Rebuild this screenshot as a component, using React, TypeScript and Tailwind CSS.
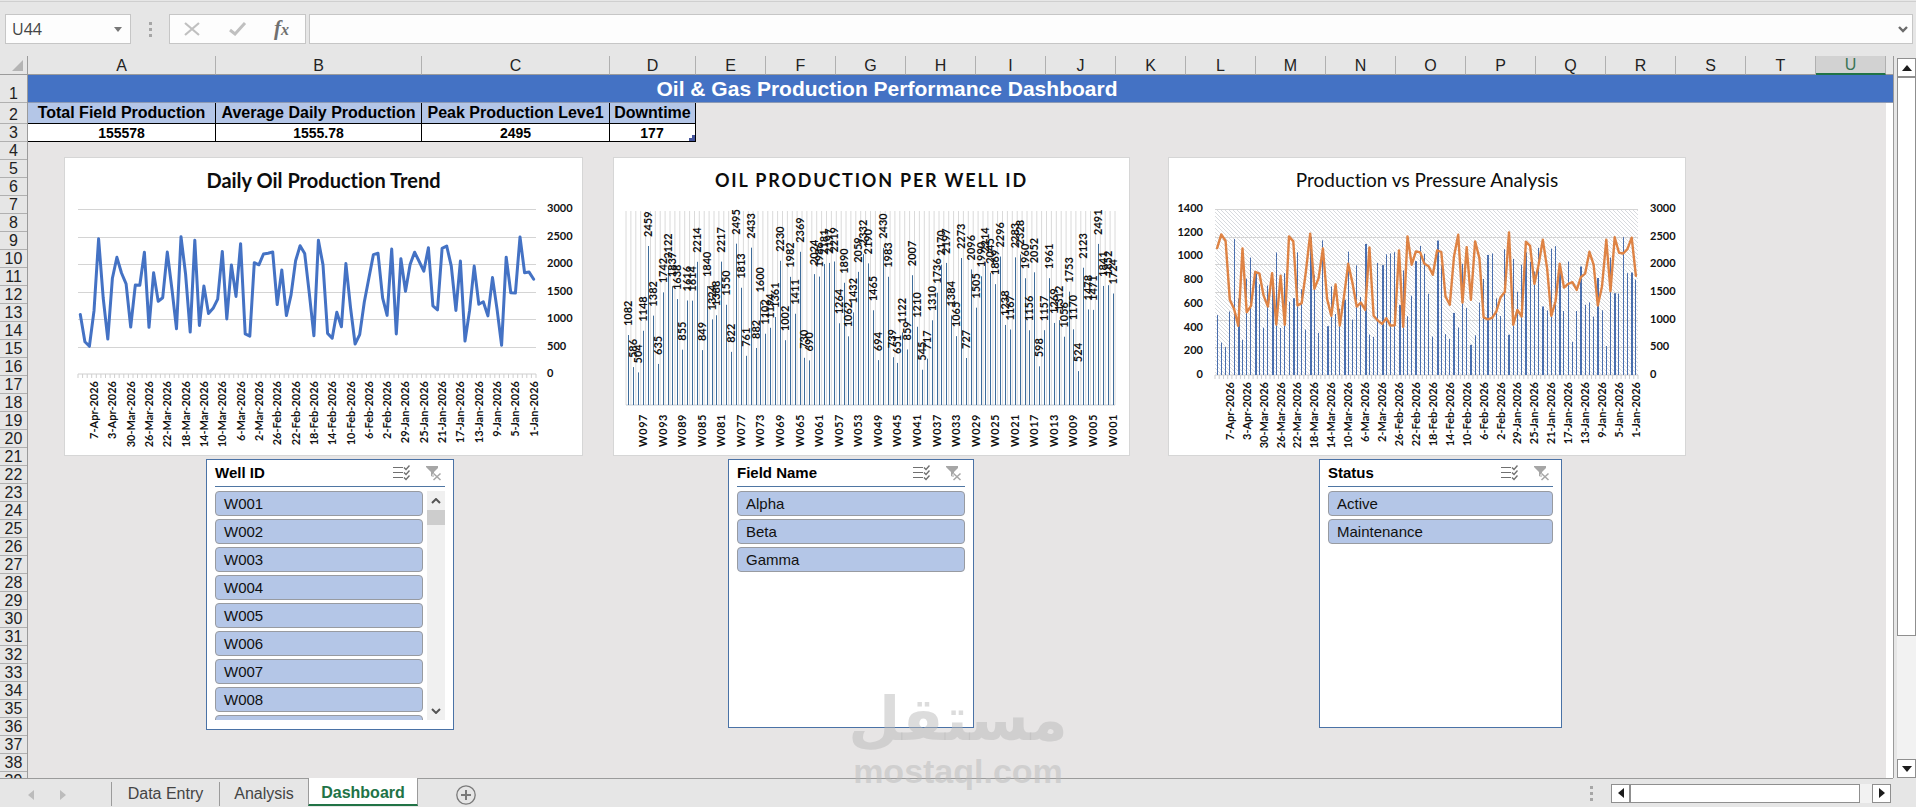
import type { ReactNode } from "react";

const PRODUCTION = [
  1082, 586, 504, 1148, 2459, 1382, 635, 1742, 2122, 1837, 1638, 855, 1616, 1614, 2214, 849, 1840, 1324, 1388, 2217,
  1550, 822, 2495, 1813, 761, 2433, 882, 1600, 1102, 1194, 1361, 2230, 1002, 1982, 1411, 2369, 730, 690, 2024, 1986,
  2181, 2197, 2219, 1264, 1890, 1062, 1432, 2059, 2332, 2190, 1465, 694, 2430, 1983, 739, 651, 1122, 859, 2007, 1210,
  545, 717, 1310, 1736, 2170, 2197, 1384, 1065, 2273, 727, 2096, 1505, 1990, 2214, 2045, 1869, 2296, 1238, 1167, 2283,
  2328, 1960, 1156, 2052, 598, 1157, 1961, 1269, 1312, 1056, 1753, 1170, 524, 2123, 1478, 1471, 2491, 1841, 1852, 1724,
];

const PRESSURE = [
  1070, 1186, 1130, 634, 558, 414, 1068, 530, 583, 870, 856, 670, 577, 859, 425, 837, 423, 1169, 1127, 586,
  606, 873, 1192, 727, 817, 1068, 642, 499, 763, 417, 662, 938, 775, 577, 611, 549, 1076, 499, 459, 431,
  479, 417, 420, 1051, 406, 1169, 930, 1042, 1034, 938, 918, 845, 1051, 1037, 662, 592, 1000, 1183, 611, 1079,
  634, 1127, 986, 487, 470, 482, 535, 654, 699, 1203, 423, 549, 493, 1124, 1090, 769, 930, 1141, 901, 499,
  620, 938, 738, 769, 783, 718, 825, 854, 1039, 930, 586, 746, 1141, 707, 1161, 1031, 1025, 1062, 1158, 837,
];

const DATES = [
  "7-Apr-2026", "3-Apr-2026", "30-Mar-2026", "26-Mar-2026", "22-Mar-2026", "18-Mar-2026", "14-Mar-2026",
  "10-Mar-2026", "6-Mar-2026", "2-Mar-2026", "26-Feb-2026", "22-Feb-2026", "18-Feb-2026", "14-Feb-2026",
  "10-Feb-2026", "6-Feb-2026", "2-Feb-2026", "29-Jan-2026", "25-Jan-2026", "21-Jan-2026", "17-Jan-2026",
  "13-Jan-2026", "9-Jan-2026", "5-Jan-2026", "1-Jan-2026",
];

const COLUMNS = "ABCDEFGHIJKLMNOPQRSTU".split("");
const COUNT = PRODUCTION.length;
const AXIS_TEXT = "fill-[#111] text-[11px] font-bold";

type Plot = { left: number; right: number; top: number; bottom: number };

const centre = (p: Plot, i: number) => p.left + ((i + 0.5) * (p.right - p.left)) / COUNT;
const level = (p: Plot, value: number, max: number) => p.bottom - (value / max) * (p.bottom - p.top);
const toPoints = (p: Plot, data: number[], max: number) =>
  data.map((v, i) => `${centre(p, i).toFixed(1)},${level(p, v, max).toFixed(1)}`).join(" ");

const WIDE_BARS = new Set(Array.from({ length: 23 }, (_, n) => Math.floor(5.4 + n * 4.25)));

function Vertical({ x, y, anchor, className, children }: { x: number; y: number; anchor: "start" | "end"; className: string; children: ReactNode }) {
  return (
    <text x={x} y={y} transform={`rotate(-90 ${x} ${y})`} dy="4" textAnchor={anchor} className={className}>
      {children}
    </text>
  );
}

function DateAxis({ plot }: { plot: Plot }) {
  const step = (plot.right - plot.left) / COUNT;
  return (
    <g>
      <path
        d={Array.from({ length: COUNT + 1 }, (_, i) => `M${(plot.left + i * step).toFixed(1)} ${plot.bottom}v4`).join("")}
        stroke="#cfcfcf"
      />
      <path d={`M${plot.left} ${plot.bottom}H${plot.right}`} stroke="#cfcfcf" />
      {DATES.map((d, i) => (
        <Vertical key={d} x={centre(plot, 3 + i * 4)} y={plot.bottom + 7} anchor="end" className={AXIS_TEXT}>
          {d}
        </Vertical>
      ))}
    </g>
  );
}

function GridLines({ plot }: { plot: Plot }) {
  return (
    <path
      d={[500, 1000, 1500, 2000, 2500, 3000].map((v) => `M${plot.left} ${Math.round(level(plot, v, 3000)) + 0.5}H${plot.right}`).join("")}
      stroke="#d4d4d4"
    />
  );
}

function ValueAxis({ plot, x, max, step, anchor }: { plot: Plot; x: number; max: number; step: number; anchor: "start" | "end" }) {
  return (
    <g>
      {Array.from({ length: max / step + 1 }, (_, i) => i * step).map((v) => (
        <text key={v} x={x} y={level(plot, v, max) + 3} textAnchor={anchor} className={AXIS_TEXT}>
          {v}
        </text>
      ))}
    </g>
  );
}

function ChartCard({ title, titleClass, children }: { title: string; titleClass: string; children: ReactNode }) {
  return (
    <figure className="border border-[#d6d6d6] bg-white font-['Lato',sans-serif] [font-variant-ligatures:none]">
      <figcaption className={`flex h-12 items-center justify-center pb-1 leading-6 whitespace-nowrap text-[#0d0d0d] ${titleClass}`}>{title}</figcaption>
      {children}
    </figure>
  );
}

function TrendChart() {
  const plot = { left: 13, right: 471, top: 3, bottom: 168 };
  return (
    <ChartCard title="Daily Oil Production Trend" titleClass="text-[20px] font-bold">
      <svg viewBox="0 0 517 249" className="block w-full overflow-visible">
        <GridLines plot={plot} />
        <DateAxis plot={plot} />
        <ValueAxis plot={plot} x={482} max={3000} step={500} anchor="start" />
        <polyline points={toPoints(plot, PRODUCTION, 3000)} fill="none" stroke="#4472c4" strokeWidth="3" strokeLinejoin="round" strokeLinecap="round" />
      </svg>
    </ChartCard>
  );
}

function WellChart() {
  const plot = { left: 12, right: 501, top: 5, bottom: 199 };
  const step = (plot.right - plot.left) / COUNT;
  return (
    <ChartCard title="OIL PRODUCTION PER WELL ID" titleClass="text-[18px] font-bold tracking-widest">
      <svg viewBox="0 0 515 249" className="block w-full overflow-visible">
        <path
          d={Array.from({ length: COUNT + 1 }, (_, i) => `M${(plot.left + i * step).toFixed(1)} ${plot.top}V${plot.bottom}`).join("")}
          stroke="#dadada"
        />
        <path d={`M${plot.left} ${plot.bottom}H${plot.right}`} stroke="#c4ccd4" />
        {PRODUCTION.map((v, i) => {
          const x = centre(plot, i);
          const y = level(plot, v, 3000);
          return (
            <g key={i}>
              <rect x={Math.round(x)} y={y} width="1" height={plot.bottom - y} fill="#3f6d9b" />
              <Vertical x={x} y={y - 9} anchor="start" className="fill-[#111] text-[11px] font-bold">
                {v}
              </Vertical>
            </g>
          );
        })}
        {Array.from({ length: 25 }, (_, i) => (
          <Vertical key={i} x={centre(plot, 3 + i * 4)} y={plot.bottom + 9} anchor="end" className="fill-[#111] text-[11px] font-bold tracking-wider">
            {`W${String(97 - i * 4).padStart(3, "0")}`}
          </Vertical>
        ))}
      </svg>
    </ChartCard>
  );
}

function PressureChart() {
  const plot = { left: 46, right: 469, top: 3, bottom: 169 };
  return (
    <ChartCard title="Production vs Pressure Analysis" titleClass="text-[19px]">
      <svg viewBox="0 0 516 249" className="block w-full overflow-visible">
        <defs>
          <pattern id="hatch" width="4" height="4" patternUnits="userSpaceOnUse">
            <path d="M0 0L4 4M-1 3L1 5M3 -1L5 1" stroke="#d2d6da" strokeWidth="0.9" />
          </pattern>
        </defs>
        <rect x={plot.left} y={plot.top} width={plot.right - plot.left} height={plot.bottom - plot.top} fill="url(#hatch)" />
        <GridLines plot={plot} />
        <DateAxis plot={plot} />
        <ValueAxis plot={plot} x={34} max={1400} step={200} anchor="end" />
        <ValueAxis plot={plot} x={481} max={3000} step={500} anchor="start" />
        {PRODUCTION.map((v, i) => {
          const y = level(plot, v, 3000);
          return <rect key={i} x={Math.round(centre(plot, i) - 0.5)} y={y} width={WIDE_BARS.has(i) ? 2 : 1} height={plot.bottom - y} fill="#4a6fae" />;
        })}
        <polyline points={toPoints(plot, PRESSURE, 1400)} fill="none" stroke="#de8344" strokeWidth="2.4" strokeLinejoin="round" strokeLinecap="round" />
      </svg>
    </ChartCard>
  );
}

function MultiSelectIcon() {
  return (
    <svg viewBox="0 0 17 16" className="h-4 w-[17px]" fill="none" stroke="#707070">
      <path d="M0 2.5H10M0 7.5H10M0 12.5H10" />
      <path d="M11 2.5L13 4.5L16.5 0.5M11 7.5L13 9.5L16.5 5.5M11 12.5L13 14.5L16.5 10.5" strokeWidth="1.4" />
    </svg>
  );
}

function ClearFilterIcon() {
  return (
    <svg viewBox="0 0 16 16" className="size-4">
      <path d="M0 1H12V3L8 7V8L5 11V7L0 2Z" fill="#a6a6a6" />
      <path d="M5.5 6V11H8" fill="none" stroke="#a6a6a6" />
      <path d="M7.5 8.5L14.5 15M14.5 8.5L7.5 15" stroke="#a6a6a6" strokeWidth="1.5" />
    </svg>
  );
}

function Chevron({ up = false }: { up?: boolean }) {
  return (
    <svg viewBox="0 0 10 6" className="h-1.5 w-[10px]" fill="none" stroke="#555" strokeWidth="2">
      <path d={up ? "M1 5L5 1L9 5" : "M1 1L5 5L9 1"} />
    </svg>
  );
}

function Slicer({ title, items, className, scroll = false }: { title: string; items: string[]; className: string; scroll?: boolean }) {
  return (
    <section aria-label={title} className={`flex flex-col border border-[#4a72a6] bg-white px-2 pb-[9px] ${className}`}>
      <header className="flex h-[27px] shrink-0 items-center border-b border-[#4f76a3]">
        <h2 className="flex-1 text-[15px] leading-5 font-bold text-black">{title}</h2>
        <button aria-label="Multi-select" className="mr-4">
          <MultiSelectIcon />
        </button>
        <button aria-label="Clear filter" className="mr-[3px]">
          <ClearFilterIcon />
        </button>
      </header>
      <div className="mt-1 flex min-h-0 flex-1 gap-1">
        <ul className="flex min-w-0 flex-1 flex-col gap-[3px] overflow-hidden">
          {items.map((item) => (
            <li key={item} className="shrink-0">
              <button className="block h-[25px] w-full rounded-sm border border-[#989ba1] bg-[#b4c6e7] px-2 text-left text-[15px] leading-5 text-[#111]">
                {item}
              </button>
            </li>
          ))}
        </ul>
        {scroll && (
          <div className="flex w-[18px] flex-col items-center bg-[#f0f0f0]">
            <button aria-label="Scroll up" className="flex h-[19px] items-center">
              <Chevron up />
            </button>
            <div className="h-[15px] w-full bg-[#cdcdcd]" />
            <button aria-label="Scroll down" className="mt-auto flex h-[19px] items-center">
              <Chevron />
            </button>
          </div>
        )}
      </div>
    </section>
  );
}

function FormulaBar() {
  return (
    <div className="flex h-[54px] shrink-0 items-start border-t border-[#cfcfcf] pt-3 pr-[3px] pl-[5px] font-['Open_Sans','Noto_Sans',sans-serif]">
      <div className="flex h-[30px] w-[126px] items-center border border-[#c6c6c6] bg-[#fdfdfd] pr-2">
        <input aria-label="Name box" defaultValue="U44" className="min-w-0 flex-1 bg-transparent pl-1.5 text-base text-[#444] outline-none" />
        <svg viewBox="0 0 8 5" className="h-[5px] w-2">
          <path d="M0 0H8L4 5Z" fill="#777" />
        </svg>
      </div>
      <div className="flex h-[30px] w-[38px] flex-col items-center justify-center gap-[3px]">
        <i className="size-[3px] bg-[#a6a6a6]" />
        <i className="size-[3px] bg-[#a6a6a6]" />
        <i className="size-[3px] bg-[#a6a6a6]" />
      </div>
      <div className="mr-[3px] flex h-[30px] w-[137px] items-center border border-[#c6c6c6] bg-[#fdfdfd] pl-[14px]">
        <button aria-label="Cancel" className="mr-[29px]">
          <svg viewBox="0 0 16 14" className="h-3.5 w-4" stroke="#c0c0c0" strokeWidth="2.2" fill="none">
            <path d="M1 1L15 13M15 1L1 13" />
          </svg>
        </button>
        <button aria-label="Enter" className="mr-[27px]">
          <svg viewBox="0 0 18 14" className="h-3.5 w-[18px]" stroke="#c0c0c0" strokeWidth="3" fill="none">
            <path d="M1 8L6 12L16 1" />
          </svg>
        </button>
        <button aria-label="Insert function" className="font-['Liberation_Serif',serif] text-[21px] leading-6 font-bold text-[#707070] italic">
          f<span className="text-base">x</span>
        </button>
      </div>
      <div className="flex h-[30px] flex-1 items-center border border-[#c6c6c6] bg-[#fdfdfd] pr-1">
        <input aria-label="Formula bar" className="min-w-0 flex-1 bg-transparent px-2 text-base outline-none" />
        <svg viewBox="0 0 10 7" className="h-[7px] w-[10px]" fill="none" stroke="#6b6b6b" strokeWidth="2.4">
          <path d="M1 1L5 5L9 1" />
        </svg>
      </div>
    </div>
  );
}

const rowHeight = (row: number) => (row === 1 ? "h-7" : row === 2 ? "h-[21px]" : "h-[18px]");

function RowHeadings() {
  return (
    <div className="flex w-7 shrink-0 flex-col overflow-hidden border-r border-[#9b9b9b] text-base text-[#222]">
      <div className="flex h-[19px] shrink-0 items-end justify-end border-b border-[#9b9b9b] pr-1 pb-[3px]">
        <svg viewBox="0 0 11 11" className="size-[11px]">
          <path d="M11 0V11H0Z" fill="#b4b4b4" />
        </svg>
      </div>
      {Array.from({ length: 39 }, (_, i) => i + 1).map((row) => (
        <div key={row} className={`flex shrink-0 items-end justify-center border-b border-[#b0b0b0] leading-4 ${rowHeight(row)}`}>
          {row}
        </div>
      ))}
    </div>
  );
}

const KPIS = [
  ["Total Field Production", "155578"],
  ["Average Daily Production", "1555.78"],
  ["Peak Production Leve1", "2495"],
  ["Downtime", "177"],
];

function CellTable() {
  return (
    <table className="w-full table-fixed border-separate border-spacing-0 text-center">
      <colgroup>
        <col className="w-[188px]" />
        <col className="w-[206px]" />
        <col className="w-[188px]" />
        <col className="w-[86px]" />
        {COLUMNS.slice(4).map((c) => (
          <col key={c} className="w-[70px]" />
        ))}
        <col />
      </colgroup>
      <thead>
        <tr className="h-[19px] text-base leading-4">
          {COLUMNS.map((c) => (
            <th
              key={c}
              scope="col"
              className={
                c === "U"
                  ? "border-r border-b-2 border-r-[#b0b0b0] border-b-[#217346] bg-[#d2d2d2] p-0 pt-px font-normal text-[#3b7557]"
                  : "border-r border-b border-r-[#b0b0b0] border-b-[#9b9b9b] p-0 pt-0.5 font-normal text-[#222]"
              }
            >
              {c}
            </th>
          ))}
          <td className="border-b border-[#9b9b9b] p-0" />
        </tr>
      </thead>
      <tbody>
        <tr className="h-7 bg-[#4472c4]">
          <td colSpan={19} className="border-b border-[#8d9ab5] p-0 text-[21px] leading-6 font-bold text-white">
            Oil &amp; Gas Production Performance Dashboard
          </td>
          <td colSpan={3} className="border-b border-[#8d9ab5] p-0" />
        </tr>
        <tr className="h-[21px] text-base leading-5">
          {KPIS.map(([name]) => (
            <td key={name} className="border-r border-b border-black bg-[#b4c6e7] p-0 font-bold whitespace-nowrap text-black">
              {name}
            </td>
          ))}
          <td colSpan={17} className="bg-[#e7e5e5] p-0" />
          <td className="bg-white p-0" />
        </tr>
        <tr className="h-[18px] text-sm leading-4">
          {KPIS.map(([name, value]) => (
            <td key={name} className="border-r border-b border-black bg-white p-0 font-bold text-black">
              {name === "Downtime" ? (
                <div className="flex items-end">
                  <span className="flex-1 pl-[5px]">{value}</span>
                  <svg viewBox="0 0 6 6" className="size-1.5">
                    <path d="M3 0H6V6H0V3H3Z" fill="#44549c" />
                  </svg>
                </div>
              ) : (
                value
              )}
            </td>
          ))}
          <td colSpan={17} className="bg-[#e7e5e5] p-0" />
          <td className="bg-white p-0" />
        </tr>
      </tbody>
    </table>
  );
}

const ARROWS = {
  up: "M0 6L5 0L10 6Z",
  down: "M0 0H10L5 6Z",
  left: "M6 0V10L0 5Z",
  right: "M0 0V10L6 5Z",
};

function ScrollButton({ direction, label }: { direction: keyof typeof ARROWS; label: string }) {
  const tall = direction === "left" || direction === "right";
  return (
    <button aria-label={label} className="flex size-[19px] shrink-0 items-center justify-center border border-[#8f8f8f] bg-white">
      <svg viewBox={tall ? "0 0 6 10" : "0 0 10 6"} className={tall ? "h-[10px] w-1.5" : "h-1.5 w-[10px]"}>
        <path d={ARROWS[direction]} fill="#1c1c1c" />
      </svg>
    </button>
  );
}

function SheetTabs() {
  return (
    <footer className="flex h-[29px] shrink-0 items-start text-base">
      <div className="flex h-[29px] w-[111px] items-center gap-[26px] border-t border-[#9b9b9b] pt-1 pl-7">
        <svg viewBox="0 0 6 10" className="h-[10px] w-1.5">
          <path d={ARROWS.left} fill="#bcbcbc" />
        </svg>
        <svg viewBox="0 0 6 10" className="h-[10px] w-1.5">
          <path d={ARROWS.right} fill="#bcbcbc" />
        </svg>
      </div>
      <nav className="flex h-[29px]">
        <a href="#data-entry" className="flex w-[108px] border-t border-[#9b9b9b] pt-[3px] text-[#444]">
          <span className="flex h-6 flex-1 items-center justify-center border-l border-[#9b9b9b]">Data Entry</span>
        </a>
        <a href="#analysis" className="flex w-[89px] border-t border-[#9b9b9b] pt-[3px] text-[#444]">
          <span className="flex h-6 flex-1 items-center justify-center border-l border-[#9b9b9b]">Analysis</span>
        </a>
        <a href="#dashboard" aria-current="page" className="flex h-7 w-[110px] items-center justify-center border-x border-b-2 border-x-[#9b9b9b] border-b-[#217346] bg-white pt-1 font-bold text-[#217346]">
          Dashboard
        </a>
      </nav>
      <div className="flex h-[29px] flex-1 items-center border-t border-[#9b9b9b] pt-1 pl-[38px]">
        <button aria-label="New sheet">
          <svg viewBox="0 0 20 20" className="size-5" fill="none" stroke="#7a7a7a">
            <circle cx="10" cy="10" r="9.2" strokeWidth="1.3" />
            <path d="M5 10H15M10 5V15" strokeWidth="2" />
          </svg>
        </button>
      </div>
      <div className="flex h-[29px] items-center border-t border-[#9b9b9b] pr-[2px]">
        <div className="mr-[18px] flex flex-col gap-[3px]">
          <i className="size-[3px] bg-[#a6a6a6]" />
          <i className="size-[3px] bg-[#a6a6a6]" />
          <i className="size-[3px] bg-[#a6a6a6]" />
        </div>
        <ScrollButton direction="left" label="Scroll left" />
        <div className="h-[19px] w-[230px] border border-[#8f8f8f] bg-white" />
        <div className="h-[19px] w-3 bg-[#f2f2f2]" />
        <ScrollButton direction="right" label="Scroll right" />
      </div>
      <div className="w-[23px]" />
    </footer>
  );
}

export default function App() {
  return (
    <div className="relative flex h-screen flex-col overflow-hidden bg-[#e6e6e6] pt-px font-['Liberation_Sans',Arial,sans-serif]">
      <FormulaBar />
      <main className="flex min-h-0 flex-1 pt-px">
        <RowHeadings />
        <div className="flex min-w-0 flex-1 flex-col border-r border-[#9b9b9b]">
          <CellTable />
          <div className="flex min-h-0 flex-1 items-start border-r-7 border-white bg-[#e7e5e5] pt-[15px] pr-[200px] pl-9">
            <div className="flex flex-[519] flex-col gap-[3px]">
              <TrendChart />
              <Slicer
                title="Well ID"
                items={["W001", "W002", "W003", "W004", "W005", "W006", "W007", "W008", "W009"]}
                className="ml-[142px] h-[271px] w-[248px]"
                scroll
              />
            </div>
            <div className="mr-[38px] ml-[30px] flex flex-[517] flex-col gap-[3px]">
              <WellChart />
              <Slicer title="Field Name" items={["Alpha", "Beta", "Gamma"]} className="ml-[115px] h-[269px] w-[246px]" />
            </div>
            <div className="flex flex-[518] flex-col gap-[3px]">
              <PressureChart />
              <Slicer title="Status" items={["Active", "Maintenance"]} className="ml-[151px] h-[269px] w-[243px]" />
            </div>
          </div>
        </div>
        <div className="flex w-[22px] shrink-0 flex-col pt-0.5 pl-[3px]">
          <ScrollButton direction="up" label="Scroll up" />
          <div className="flex min-h-0 flex-1 flex-col bg-[#f2f2f2]">
            <div className="h-[82%] border border-[#8f8f8f] bg-white" />
          </div>
          <ScrollButton direction="down" label="Scroll down" />
        </div>
      </main>
      <SheetTabs />
      <div className="pointer-events-none absolute bottom-[18px] left-1/2 flex w-[210px] -translate-x-1/2 flex-col items-center text-[#b9b9b9]/50">
        <span lang="ar" dir="rtl" className="font-['DejaVu_Sans',sans-serif] text-[60px] leading-[68px] font-bold">
          مستقل
        </span>
        <span className="text-[34px] leading-9 font-bold">mostaql.com</span>
      </div>
    </div>
  );
}
